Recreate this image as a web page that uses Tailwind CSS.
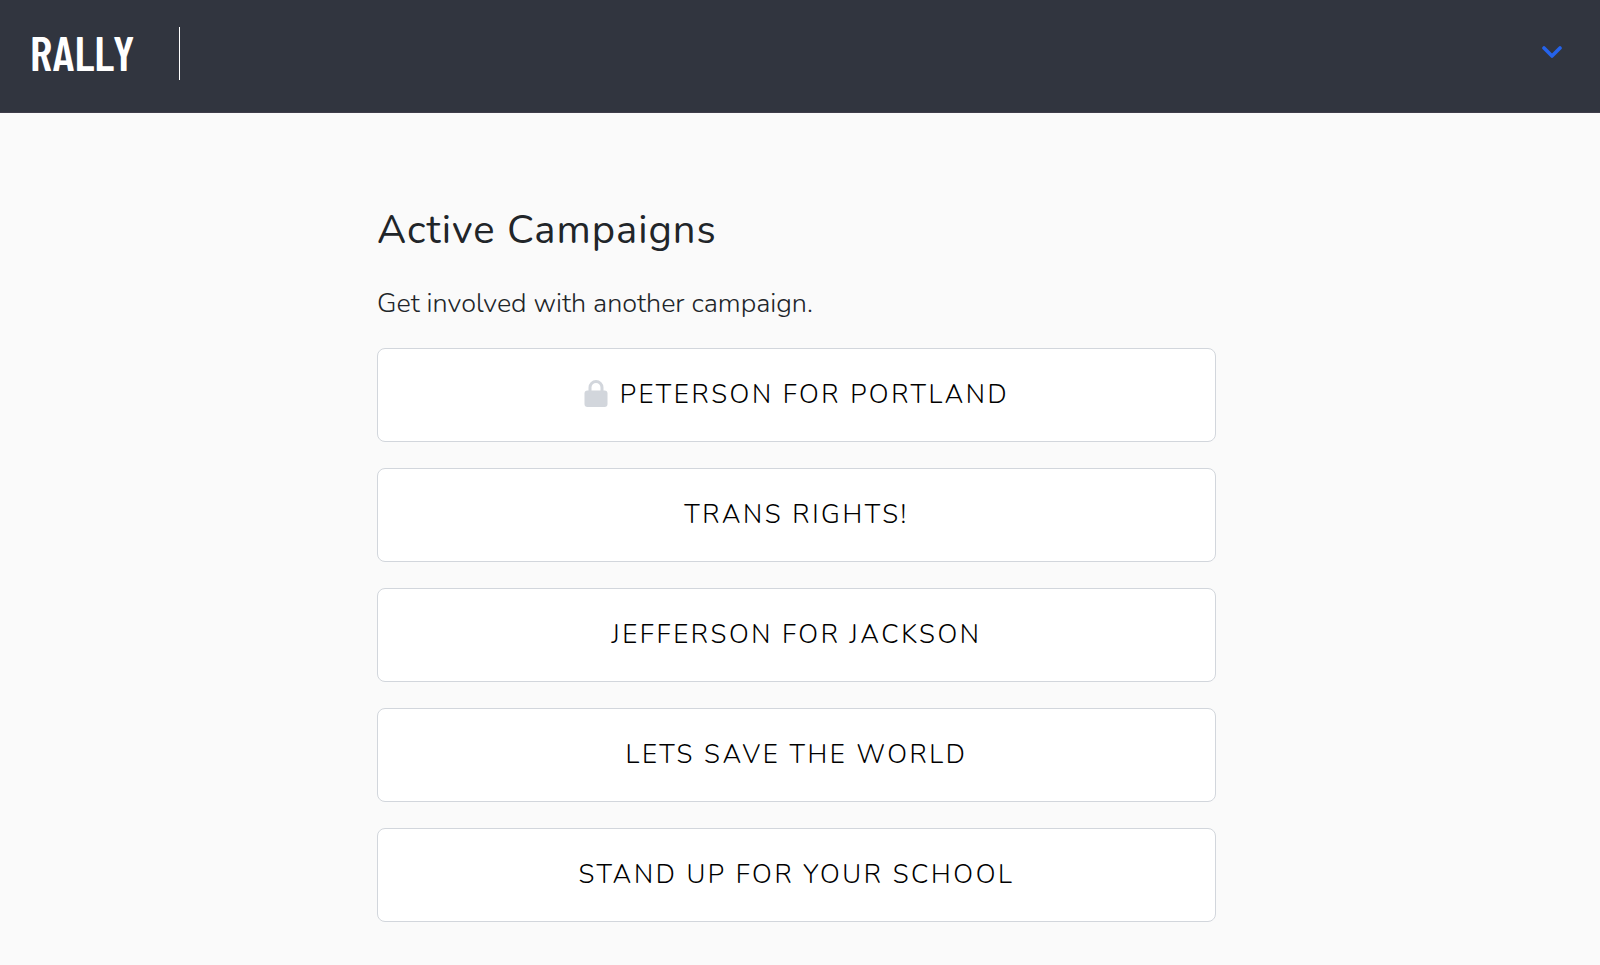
<!DOCTYPE html>
<html lang="en">
<head>
    <meta charset="UTF-8">
    <meta name="viewport" content="width=device-width, initial-scale=1">
    <title>Rally - Active Campaigns</title>
    <!-- Tailwind CSS -->
    <script src="https://cdn.jsdelivr.net/npm/@tailwindcss/browser@4"></script>
</head>
<body class="min-h-screen bg-[#fafafa] font-['Nunito','Lato',sans-serif] text-[#212529]">
    <!-- Header -->
    <header class="flex items-start justify-between bg-[#31353f] pr-8 pl-[30px] pt-[27px] pb-8 border-b border-[#3f3d4a]">
        <div class="flex items-start">
            <a href="#" class="pr-11 font-['Barlow_Condensed','Roboto_Condensed','Roboto',sans-serif] text-5xl leading-[50px] font-semibold text-white">RALLY</a>
            <div class="h-[53px] w-px bg-white"></div>
        </div>
        <button type="button" aria-label="Open menu" class="flex h-[50px] w-8 items-center justify-center text-[#2563eb]">
            <svg class="h-3 w-5" viewBox="0 0 20 12" fill="none" stroke="currentColor" stroke-width="3.6" stroke-linecap="round" stroke-linejoin="round" aria-hidden="true">
                <path d="M2 2l8 8 8-8" />
            </svg>
        </button>
    </header>

    <!-- Campaign list -->
    <main class="pr-[7px] pt-[91px] pb-10">
        <div class="mx-auto max-w-[839px]">
            <h1 class="text-[40px] leading-[52px] tracking-wide">Active Campaigns</h1>
            <p class="mt-7 text-[27px] leading-[40px] font-light">Get involved with another campaign.</p>

            <ul class="mt-6 flex flex-col gap-[26px] text-[26px] leading-[40px] font-light tracking-widest text-black uppercase">
                <li>
                    <a href="#" class="flex items-center justify-center gap-3 rounded-lg border border-[#d2d6dc] bg-white py-[26px]">
                        <svg class="mb-1 h-[27px] w-6 text-[#d2d6dc]" viewBox="0 0 24 27" aria-hidden="true">
                            <path d="M6 12V7.5a6 6 0 0 1 12 0V12" fill="none" stroke="currentColor" stroke-width="3" />
                            <rect x="0.5" y="10.5" width="23" height="16.5" rx="3" fill="currentColor" />
                        </svg>
                        Peterson for Portland
                    </a>
                </li>
                <li><a href="#" class="flex items-center justify-center rounded-lg border border-[#d2d6dc] bg-white py-[26px]">Trans Rights!</a></li>
                <li><a href="#" class="flex items-center justify-center rounded-lg border border-[#d2d6dc] bg-white py-[26px]">Jefferson for Jackson</a></li>
                <li><a href="#" class="flex items-center justify-center rounded-lg border border-[#d2d6dc] bg-white py-[26px]">Lets save the world</a></li>
                <li><a href="#" class="flex items-center justify-center rounded-lg border border-[#d2d6dc] bg-white py-[26px]">Stand up for your school</a></li>
            </ul>
        </div>
    </main>
</body>
</html>
